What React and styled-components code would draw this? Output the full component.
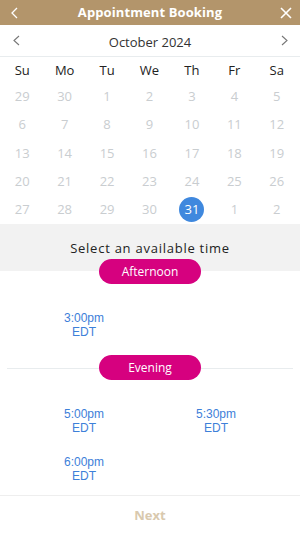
import React from "react";
import styled, { createGlobalStyle } from "styled-components";

const Global = createGlobalStyle`
  html, body { margin: 0; padding: 0; background: #fff; }
  body { font-family: "Open Sans", "Liberation Sans", sans-serif; }
  * { box-sizing: border-box; }
`;

const Page = styled.div`
  width: 300px;
  height: 533px;
  display: flex;
  flex-direction: column;
  overflow: hidden;
  background: #fff;
`;

const Header = styled.div`
  height: 25px;
  background: #b3956b;
  display: flex;
  align-items: center;
  justify-content: space-between;
  padding: 0 7px 0 7px;
  color: #fff;
`;

const Title = styled.div`
  font-weight: 700;
  font-size: 13px;
  letter-spacing: 0.1px;
  line-height: 19px;
`;

const IconBtn = styled.div`
  width: 14px;
  height: 14px;
  display: flex;
  align-items: center;
  justify-content: center;
`;

const MonthNav = styled.div`
  height: 32px;
  display: flex;
  align-items: center;
  justify-content: space-between;
  padding: 0 9px 0 9px;
  border-bottom: 1px solid #e8ecee;
`;

const MonthLabel = styled.div`
  font-size: 13px;
  color: #333;
  line-height: 18px;
  margin-top: 2px;
`;

const Grid = styled.div`
  display: grid;
  grid-template-columns: repeat(7, 1fr);
  padding: 0 2px 0 1px;
`;

const DayHead = styled.div`
  height: 25px;
  display: flex;
  align-items: center;
  justify-content: center;
  font-size: 13px;
  color: #222;
`;

const DayCell = styled.div`
  height: 28.3px;
  display: flex;
  align-items: center;
  justify-content: center;
  font-size: 13px;
  color: #c9cdd0;
`;

const Selected = styled.span`
  width: 25px;
  height: 25px;
  border-radius: 50%;
  background: #3f88de;
  color: #fff;
  display: flex;
  align-items: center;
  justify-content: center;
  font-size: 13px;
`;

const Prompt = styled.div`
  background: #f2f2f2;
  height: 47px;
  display: flex;
  align-items: center;
  justify-content: center;
  font-size: 13px;
  letter-spacing: 0.75px;
  color: #222;
  margin-top: 1px;
`;

const PromptText = styled.span`
  margin-top: 1px;
`;

const GroupHead = styled.div`
  position: relative;
  display: flex;
  justify-content: center;
  margin: ${(p) => p.$mt || "0"} 0 0 0;
  &::before {
    content: "";
    display: ${(p) => (p.$line ? "block" : "none")};
    position: absolute;
    left: 7px;
    right: 7px;
    top: 50%;
    height: 1px;
    background: #e8ecee;
  }
`;

const Pill = styled.div`
  position: relative;
  width: 102px;
  height: 25px;
  border-radius: 13px;
  background: #d6017f;
  color: #fff;
  font-size: 12px;
  display: flex;
  align-items: center;
  justify-content: center;
`;

const Slots = styled.div`
  display: grid;
  grid-template-columns: 1fr 1fr;
  padding: 17px 18px 0 18px;
`;

const Slot = styled.div`
  height: 48px;
  display: flex;
  flex-direction: column;
  align-items: center;
  justify-content: center;
  font-family: "Liberation Sans", Arial, sans-serif;
  font-size: 12px;
  line-height: 14px;
  color: #3d80d9;
`;

const Spacer = styled.div`
  flex: 1;
`;

const Footer = styled.div`
  height: 38px;
  border-top: 1px solid #eeeeee;
  display: flex;
  align-items: center;
  justify-content: center;
  font-weight: 700;
  font-size: 13px;
  color: #d9c9ae;
`;

const Chevron = ({ dir = "left", color = "#fff", w = 7, h = 12, sw = 1.6 }) => (
  <svg width={w} height={h} viewBox={`0 0 ${w} ${h}`}>
    {dir === "left" ? (
      <polyline points={`${w - 1},1 1,${h / 2} ${w - 1},${h - 1}`} fill="none" stroke={color} strokeWidth={sw} />
    ) : (
      <polyline points={`1,1 ${w - 1},${h / 2} 1,${h - 1}`} fill="none" stroke={color} strokeWidth={sw} />
    )}
  </svg>
);

const Close = () => (
  <svg width="12" height="12" viewBox="0 0 12 12">
    <path d="M1 1 L11 11 M11 1 L1 11" stroke="#fff" strokeWidth="1.6" />
  </svg>
);

const days = ["Su", "Mo", "Tu", "We", "Th", "Fr", "Sa"];
const dates = [
  29, 30, 1, 2, 3, 4, 5,
  6, 7, 8, 9, 10, 11, 12,
  13, 14, 15, 16, 17, 18, 19,
  20, 21, 22, 23, 24, 25, 26,
  27, 28, 29, 30, 31, 1, 2,
];

const TimeSlot = ({ t }) => (
  <Slot>
    <span>{t}</span>
    <span>EDT</span>
  </Slot>
);

export default function App() {
  return (
    <>
      <Global />
      <Page>
        <Header>
          <IconBtn><Chevron dir="left" w={7} h={12} sw={1.3} /></IconBtn>
          <Title>Appointment Booking</Title>
          <IconBtn><Close /></IconBtn>
        </Header>
        <MonthNav>
          <IconBtn><Chevron dir="left" color="#777" w={7} h={11} sw={1.1} /></IconBtn>
          <MonthLabel>October 2024</MonthLabel>
          <IconBtn><Chevron dir="right" color="#777" w={7} h={11} sw={1.1} /></IconBtn>
        </MonthNav>
        <Grid>
          {days.map((d) => (
            <DayHead key={d}>{d}</DayHead>
          ))}
          {dates.map((d, i) => (
            <DayCell key={i}>{i === 32 ? <Selected>{d}</Selected> : d}</DayCell>
          ))}
        </Grid>
        <Prompt><PromptText>Select an available time</PromptText></Prompt>
        <GroupHead $mt="-12px">
          <Pill>Afternoon</Pill>
        </GroupHead>
        <Slots>
          <TimeSlot t="3:00pm" />
        </Slots>
        <GroupHead $mt="6px" $line>
          <Pill>Evening</Pill>
        </GroupHead>
        <Slots>
          <TimeSlot t="5:00pm" />
          <TimeSlot t="5:30pm" />
          <TimeSlot t="6:00pm" />
        </Slots>
        <Spacer />
        <Footer>Next</Footer>
      </Page>
    </>
  );
}
